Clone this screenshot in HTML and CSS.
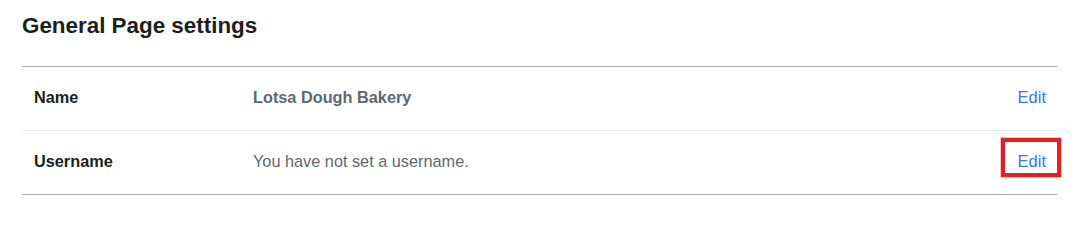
FILE: index.html
```html
<!DOCTYPE html>
<html lang="en">
<head>
    <meta charset="UTF-8">
    <title>General Page settings</title>
    <link rel="stylesheet" href="styles.css">
</head>
<body>
<div class="page">
    <h1 class="title">General Page settings</h1>

    <div class="settings">
        <div class="row">
            <div class="label">Name</div>
            <div class="value strong">Lotsa Dough Bakery</div>
            <a href="#" class="edit">Edit</a>
        </div>
        <div class="row">
            <div class="label">Username</div>
            <div class="value">You have not set a username.</div>
            <a href="#" class="edit marked">Edit<span class="marker"></span></a>
        </div>
    </div>
</div>
</body>
</html>
```

FILE: styles.css
```css
* {
    box-sizing: border-box;
}

body {
    margin: 0;
    background: #fff;
    font-family: "Liberation Sans", Arial, Helvetica, sans-serif;
    color: #1c1e21;
}

.page {
    padding: 12px 24px 0 22px;
}

.title {
    margin: 0 0 26px 0;
    font-size: 22.4px;
    line-height: 28px;
    font-weight: bold;
    color: #1c1e21;
}

.settings {
    border-top: 1px solid #acacac;
    border-bottom: 1px solid #acacac;
}

.row {
    display: flex;
    align-items: center;
    height: 63px;
    padding: 0 11px 3px 12px;
    font-size: 16.3px;
    line-height: 20px;
}

.row + .row {
    height: 64px;
    border-top: 1px solid #e9eaeb;
}

.label {
    width: 219px;
    font-weight: bold;
    color: #1c1e21;
}

.value {
    flex: 1;
    color: #606770;
}

.value.strong {
    font-weight: bold;
}

.edit {
    color: #3578e5;
    text-decoration: none;
    font-size: 16.5px;
}

.marked {
    position: relative;
}

.marker {
    position: absolute;
    left: -17px;
    right: -15px;
    top: -13px;
    bottom: -6px;
    border: 4px solid #e41f26;
    box-shadow: 0 0 0 1px rgba(228, 31, 38, 0.25);
}
```
